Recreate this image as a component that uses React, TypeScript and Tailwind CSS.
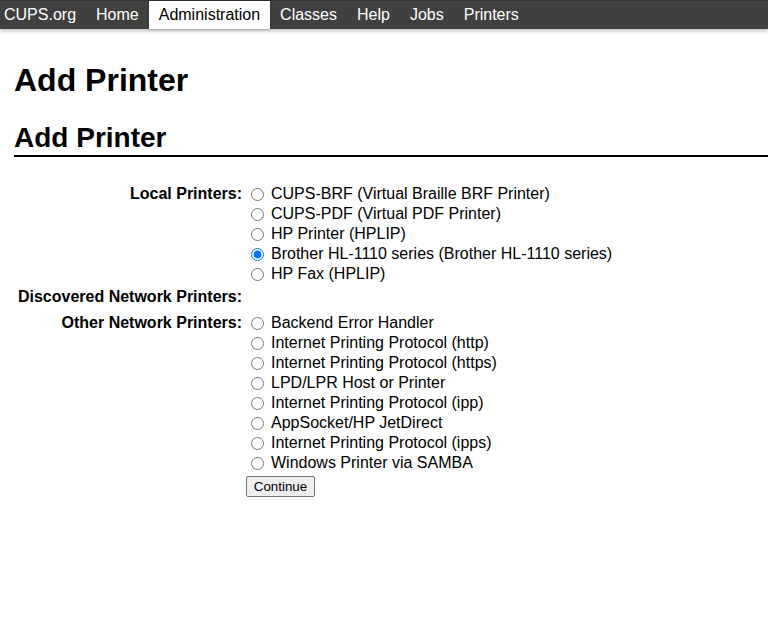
import React from "react";

const local = [
  { label: "CUPS-BRF (Virtual Braille BRF Printer)" },
  { label: "CUPS-PDF (Virtual PDF Printer)" },
  { label: "HP Printer (HPLIP)" },
  { label: "Brother HL-1110 series (Brother HL-1110 series)", checked: true },
  { label: "HP Fax (HPLIP)" },
];

const other = [
  "Backend Error Handler",
  "Internet Printing Protocol (http)",
  "Internet Printing Protocol (https)",
  "LPD/LPR Host or Printer",
  "Internet Printing Protocol (ipp)",
  "AppSocket/HP JetDirect",
  "Internet Printing Protocol (ipps)",
  "Windows Printer via SAMBA",
];

function Radio({ label, checked }: { label: string; checked?: boolean }) {
  return (
    <label className="flex h-[20px] items-center">
      <input
        type="radio"
        name="device"
        defaultChecked={checked}
        className="ml-[5px] mr-[7px] h-[13px] w-[13px] accent-[#0075ff]"
      />
      <span>{label}</span>
    </label>
  );
}

export default function App() {
  const nav = ["Home", "Administration", "Classes", "Help", "Jobs", "Printers"];
  return (
    <div
      className="min-h-[630px] bg-white text-[16px] text-black"
      style={{ fontFamily: '"Liberation Sans", Arial, sans-serif' }}
    >
      <div className="relative flex h-[29px] border-t border-[#333333] bg-[#404040] text-white shadow-[0_2px_4px_rgba(0,0,0,0.25)]">
        <a className="flex h-full items-center pl-[4px] pr-[10px] leading-none">CUPS.org</a>
        {nav.map((n) =>
          n === "Administration" ? (
            <a
              key={n}
              className="flex h-full items-center bg-white px-[10px] leading-none text-black shadow-[0_0_3px_rgba(0,0,0,0.3)]"
            >
              {n}
            </a>
          ) : (
            <a key={n} className="flex h-full items-center px-[10px] leading-none">
              {n}
            </a>
          )
        )}
      </div>

      <div className="pl-[14px]">
        <h1 className="mt-[33px] text-[32px] font-bold leading-[37px]">Add Printer</h1>
        <h2 className="mt-[23px] border-b-2 border-black pb-[2px] text-[28px] font-bold leading-[31px]">
          Add Printer
        </h2>
      </div>

      <div className="mt-[27px] grid grid-cols-[242px_1fr] gap-x-[4px]">
        <div className="h-[20px] text-right font-bold leading-[20px]">Local Printers:</div>
        <div className="flex flex-col">
          {local.map((l) => (
            <Radio key={l.label} label={l.label} checked={l.checked} />
          ))}
        </div>

        <div className="mt-[3px] h-[20px] text-right font-bold leading-[20px]">
          Discovered Network Printers:
        </div>
        <div className="mt-[3px]" />

        <div className="mt-[6px] h-[20px] text-right font-bold leading-[20px]">
          Other Network Printers:
        </div>
        <div className="mt-[6px] flex flex-col">
          {other.map((o) => (
            <Radio key={o} label={o} />
          ))}
          <div className="mt-[1px]">
            <button className="h-[21px] w-[69px] rounded-[2px] border border-[#767676] bg-[#efefef] text-[13.33px] leading-none text-black">
              Continue
            </button>
          </div>
        </div>
      </div>
    </div>
  );
}
